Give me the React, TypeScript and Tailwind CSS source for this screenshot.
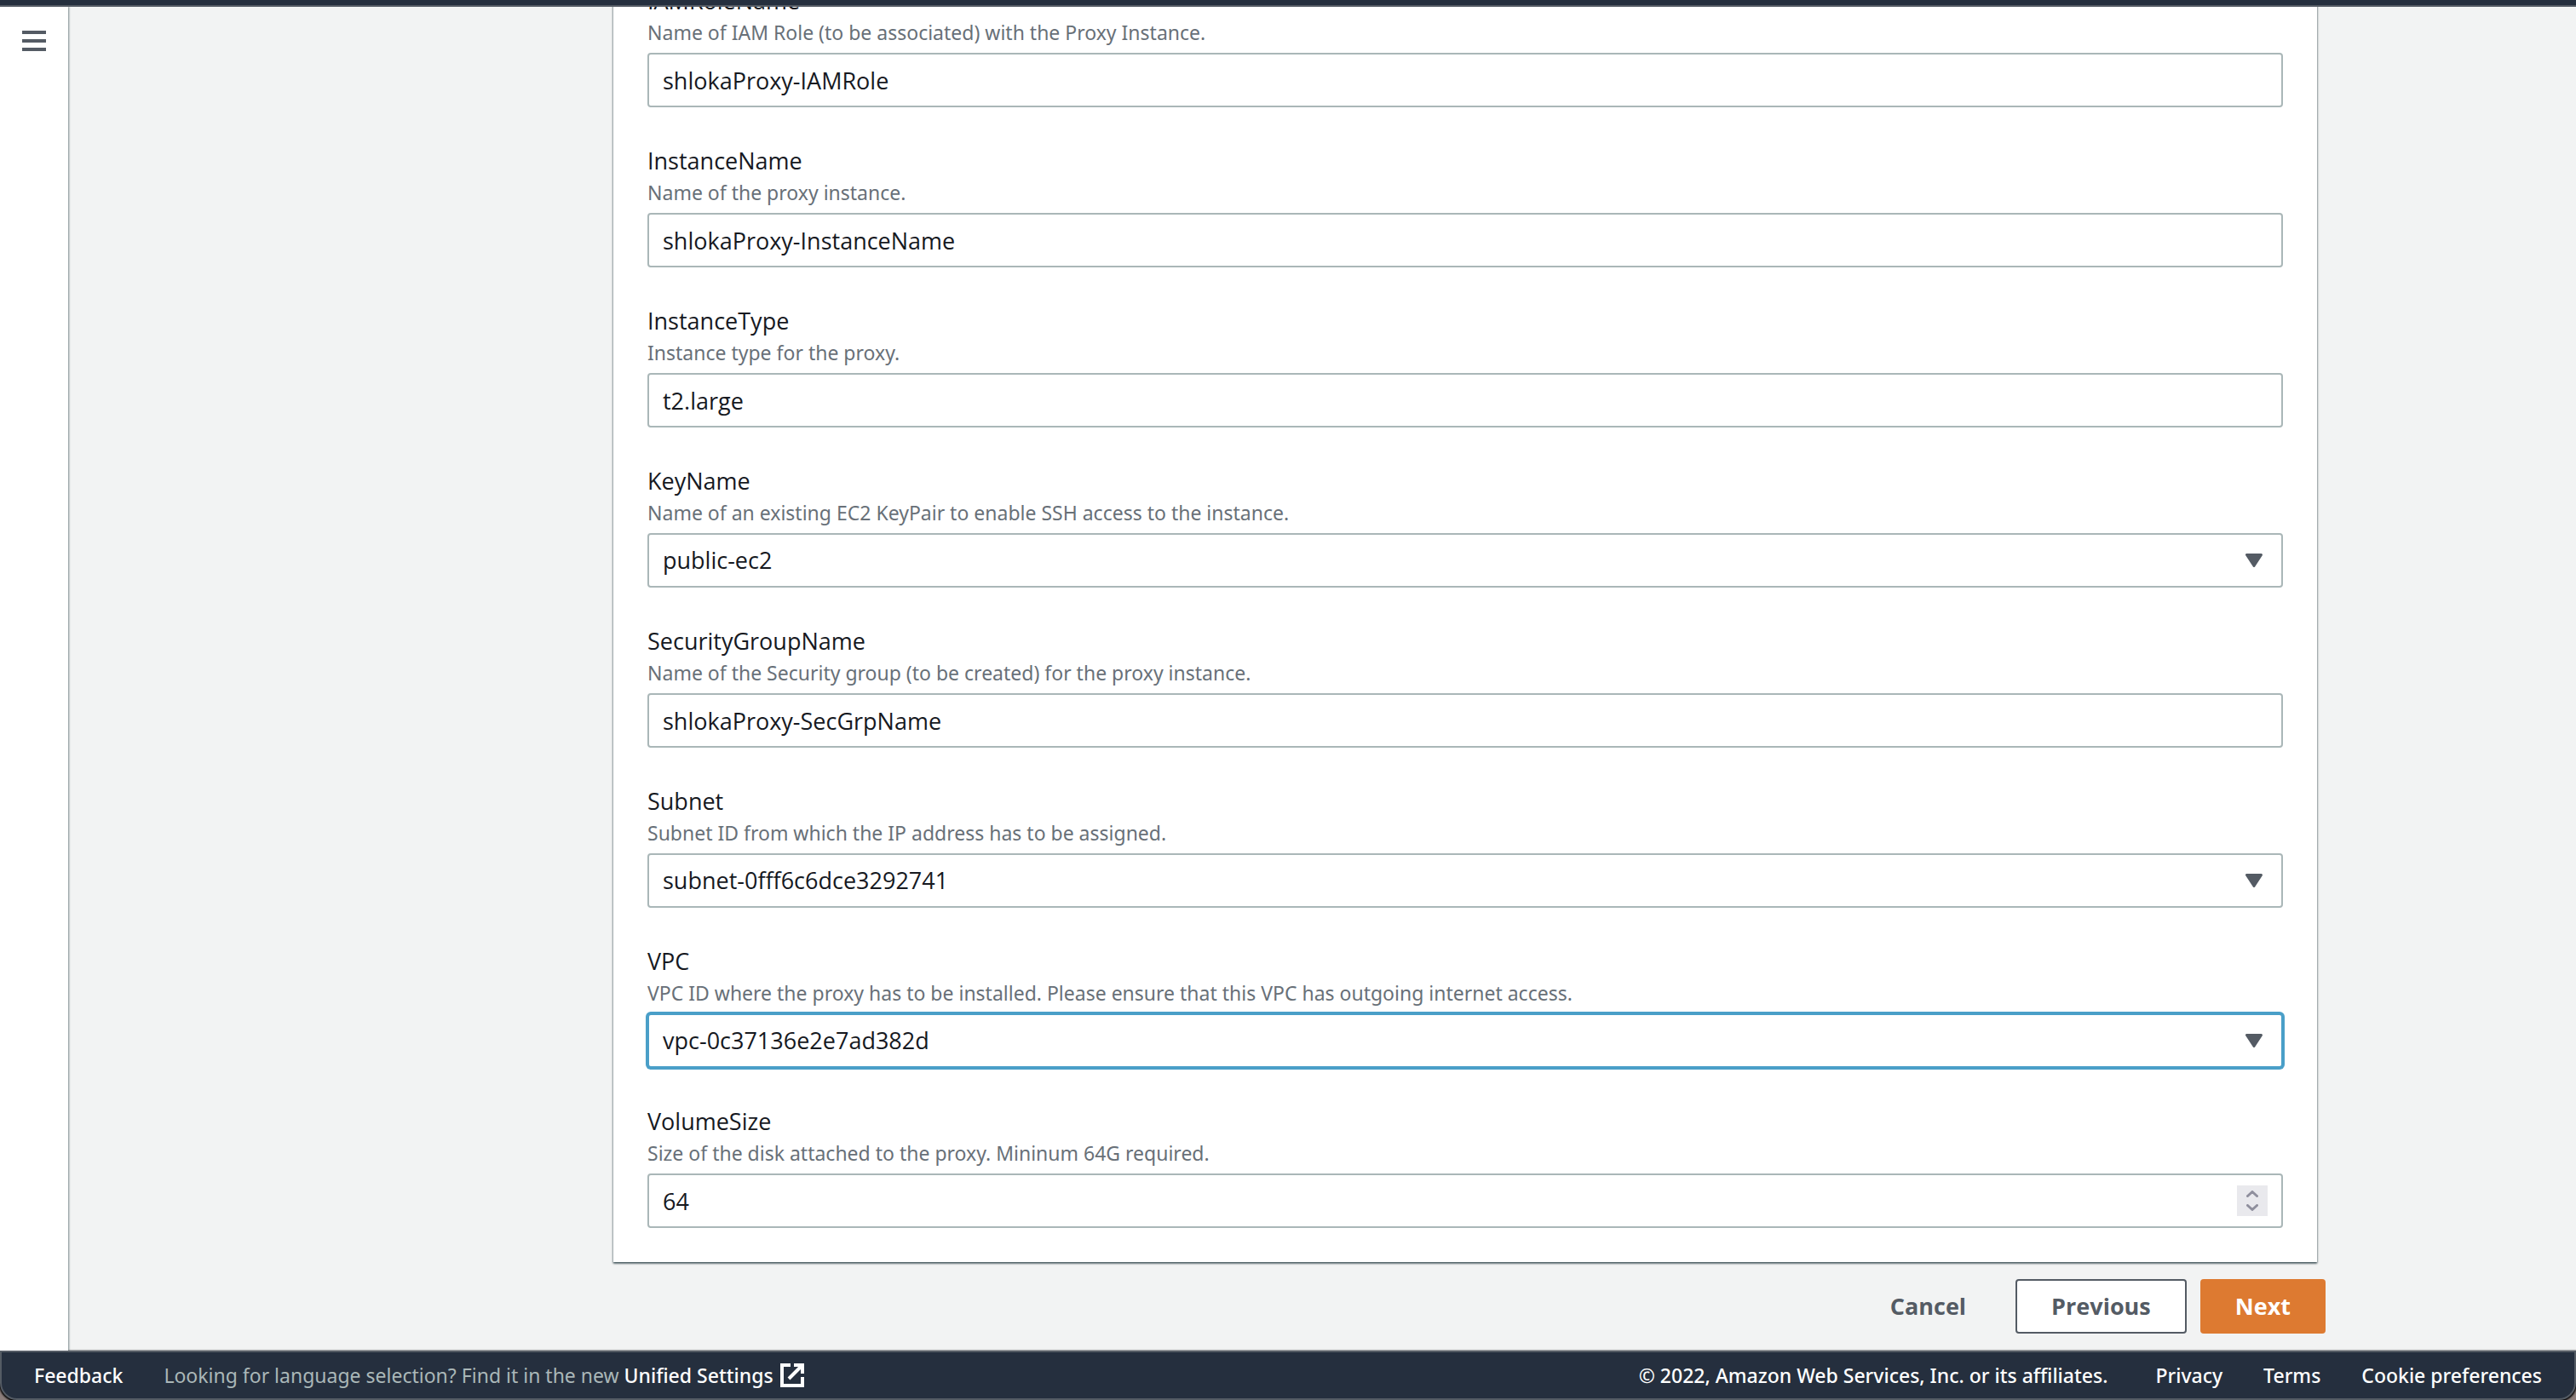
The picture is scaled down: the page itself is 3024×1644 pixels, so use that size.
import React from 'react';

type Field = {
  id: string;
  hint: string;
  value: string;
  kind: 'text' | 'select' | 'number';
  focused?: boolean;
};

const fields: Field[] = [
  { id: 'IAMRoleName', hint: 'Name of IAM Role (to be associated) with the Proxy Instance.', value: 'shlokaProxy-IAMRole', kind: 'text' },
  { id: 'InstanceName', hint: 'Name of the proxy instance.', value: 'shlokaProxy-InstanceName', kind: 'text' },
  { id: 'InstanceType', hint: 'Instance type for the proxy.', value: 't2.large', kind: 'text' },
  { id: 'KeyName', hint: 'Name of an existing EC2 KeyPair to enable SSH access to the instance.', value: 'public-ec2', kind: 'select' },
  { id: 'SecurityGroupName', hint: 'Name of the Security group (to be created) for the proxy instance.', value: 'shlokaProxy-SecGrpName', kind: 'text' },
  { id: 'Subnet', hint: 'Subnet ID from which the IP address has to be assigned.', value: 'subnet-0fff6c6dce3292741', kind: 'select' },
  { id: 'VPC', hint: 'VPC ID where the proxy has to be installed. Please ensure that this VPC has outgoing internet access.', value: 'vpc-0c37136e2e7ad382d', kind: 'select', focused: true },
  { id: 'VolumeSize', hint: 'Size of the disk attached to the proxy. Mininum 64G required.', value: '64', kind: 'number' },
];

const control =
  "block h-16 w-full appearance-none rounded-[4px] border-2 bg-white px-4 font-['Open_Sans',sans-serif] text-[27px] leading-[44px] text-[#16191f] outline-none";

function Control({ field }: { field: Field }) {
  const hintId = `${field.id}-hint`;
  if (field.kind === 'select') {
    const tone = field.focused ? 'border-[#4a9fc8] ring-2 ring-[#4a9fc8]' : 'border-[#aab7b8]';
    return (
      <div className="relative">
        <select id={field.id} aria-describedby={hintId} defaultValue={field.value} className={`${control} ${tone}`}>
          <option>{field.value}</option>
        </select>
        <svg viewBox="0 0 20 16" className="pointer-events-none absolute top-6 right-6 h-4 w-5" aria-hidden="true">
          <path d="M1.5 1.5H18.5L10 14.5Z" fill="#545b64" stroke="#545b64" strokeWidth="3" strokeLinejoin="round" />
        </svg>
      </div>
    );
  }
  if (field.kind === 'number') {
    return (
      <div className="relative">
        <input
          id={field.id}
          type="number"
          aria-describedby={hintId}
          defaultValue={field.value}
          className={`${control} border-[#aab7b8] [appearance:textfield] [&::-webkit-inner-spin-button]:appearance-none`}
        />
        <div className="absolute top-[14px] right-[18px] flex h-9 w-9 flex-col items-center justify-center gap-2 bg-[#e9e9ed]">
          <button type="button" aria-label="Increase" className="flex w-full items-center justify-center">
            <svg viewBox="0 0 14 8" className="h-2 w-[14px]" fill="none" stroke="#8f8f9d" strokeWidth="3" strokeLinecap="round" strokeLinejoin="round">
              <path d="M1.5 6.5L7 1.5L12.5 6.5" />
            </svg>
          </button>
          <button type="button" aria-label="Decrease" className="flex w-full items-center justify-center">
            <svg viewBox="0 0 14 8" className="h-2 w-[14px]" fill="none" stroke="#8f8f9d" strokeWidth="3" strokeLinecap="round" strokeLinejoin="round">
              <path d="M1.5 1.5L7 6.5L12.5 1.5" />
            </svg>
          </button>
        </div>
      </div>
    );
  }
  return (
    <input id={field.id} type="text" aria-describedby={hintId} defaultValue={field.value} className={`${control} border-[#aab7b8]`} />
  );
}

export default function App() {
  return (
    <div className="flex h-screen flex-col bg-[#8d7f7c] font-['Noto_Sans',sans-serif] text-[#16191f]">
      <header className="h-2 shrink-0 border-b-2 border-[#545b64] bg-[#252f3e]" />

      <div className="flex min-h-0 flex-1 overflow-hidden bg-[#f2f3f3]">
        <nav className="z-10 w-20 shrink-0 bg-white shadow-[1px_0_2px_0_rgba(0,28,36,0.5)]">
          <button type="button" aria-label="Open navigation" className="mt-7 ml-[26px] flex w-7 flex-col gap-[6px]">
            <span className="h-1 w-full bg-[#545b64]" />
            <span className="h-1 w-full bg-[#545b64]" />
            <span className="h-1 w-full bg-[#545b64]" />
          </button>
        </nav>

        <main className="flex min-w-0 flex-1 flex-col justify-end overflow-hidden pr-[294px] pb-5 pl-[640px]">
          <section className="mr-[10px] flex shrink-0 flex-col gap-[42px] bg-white p-10 shadow-[0_2px_2px_0_rgba(0,28,36,0.5),1px_1px_2px_0_rgba(0,28,36,0.25),-1px_1px_2px_0_rgba(0,28,36,0.25)]">
            {fields.map((field) => (
              <div key={field.id}>
                <label htmlFor={field.id} className="block font-['Open_Sans',sans-serif] text-[27px] leading-[42px]">
                  {field.id}
                </label>
                <p id={`${field.id}-hint`} className="mb-2 text-[23px] leading-8 text-[#687078]">
                  {field.hint}
                </p>
                <Control field={field} />
              </div>
            ))}
          </section>

          <div className="mt-5 flex shrink-0 justify-end gap-4 font-['Open_Sans',sans-serif] text-[27px] leading-[40px] font-bold">
            <button type="button" className="h-16 px-[42px] text-[#545b64]">Cancel</button>
            <button type="button" className="h-16 rounded-[4px] border-2 border-[#545b64] bg-white px-10 text-[#545b64]">Previous</button>
            <button type="button" className="h-16 rounded-[4px] bg-[#dd7a31] px-[41px] text-white">Next</button>
          </div>
        </main>
      </div>

      <div className="shrink-0 bg-[linear-gradient(to_bottom,#f2f3f3_50%,transparent_50%)]">
        <footer className="flex h-[58px] items-center justify-between rounded-b-[20px] border-2 border-[#545b64] bg-[#252f3e] px-[38px] text-[23px] leading-8 font-medium text-white shadow-[0_1px_2px_1px_#000]">
          <div className="flex items-center">
            <a href="#feedback" className="mr-12">Feedback</a>
            <p className="font-normal text-[#aab7b8]">
              Looking for language selection? Find it in the new{' '}
              <a href="#settings" className="font-medium text-white">Unified Settings</a>
            </p>
            <svg viewBox="0 0 28 28" className="ml-2 h-7 w-7" fill="none" stroke="#fff" strokeWidth="4" aria-hidden="true">
              <path d="M12 2H2V26H26V16" />
              <path d="M16 2H26V12M26 2L10 18" />
            </svg>
          </div>
          <div className="flex items-center">
            <span>© 2022, Amazon Web Services, Inc. or its affiliates.</span>
            <div className="ml-14 flex items-center gap-12">
              <a href="#privacy">Privacy</a>
              <a href="#terms">Terms</a>
              <a href="#cookies">Cookie preferences</a>
            </div>
          </div>
        </footer>
      </div>
    </div>
  );
}
